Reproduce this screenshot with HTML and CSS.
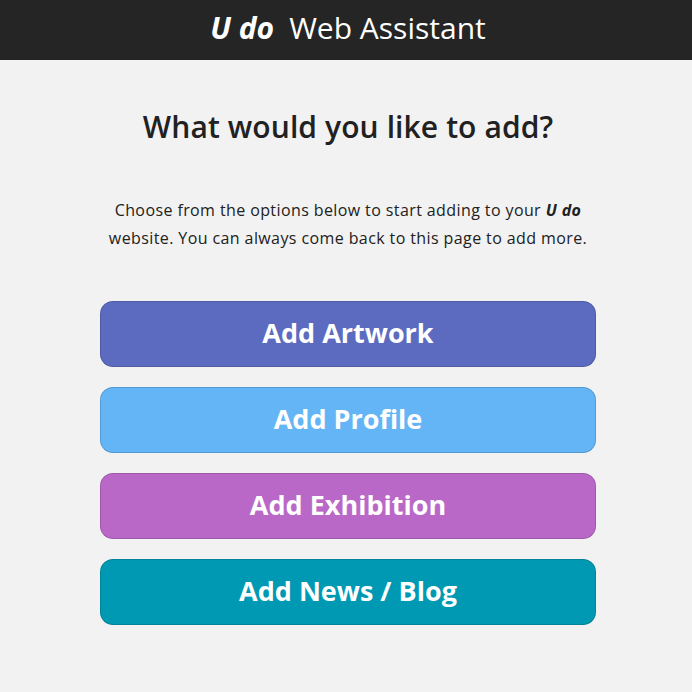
FILE: index.html
```html
<!DOCTYPE html>
<html lang="en">
<head>
    <meta charset="UTF-8">
    <meta name="viewport" content="width=device-width, initial-scale=1.0">
    <link rel="stylesheet" href="styles.css">
</head>
<body>
    <header class="top-bar">
        <span class="brand brand-top">U do</span>Web Assistant
    </header>
    <main class="content">
        <h1 class="title">What would you like to add?</h1>
        <p class="intro">
            Choose from the options below to start adding to your <span class="brand">U do</span>
            website. You can always come back to this page to add more.
        </p>
        <!-- Кнопки выбора -->
        <div class="options">
            <button class="option option-artwork">Add Artwork</button>
            <button class="option option-profile">Add Profile</button>
            <button class="option option-exhibition">Add Exhibition</button>
            <button class="option option-news">Add News / Blog</button>
        </div>
    </main>
</body>
</html>
```

FILE: styles.css
```css
body {
    background-color: #f2f2f2;
    margin: 0;
    padding: 0;
    font-family: "Open Sans", "Liberation Sans", sans-serif;
    color: #212121;
}

.top-bar {
    background-color: #252525;
    color: #ffffff;
    height: 60px;
    line-height: 55px;
    text-align: center;
    font-size: 30px;
    padding-left: 4px;
}

.brand {
    font-weight: bold;
    font-style: italic;
}

.brand-top {
    margin-right: 15px;
}

.content {
    width: 496px;
    margin: 0 0 0 calc(50% - 246px);
    text-align: center;
}

.title {
    margin: 47px 0 0;
    font-size: 30px;
    font-weight: 600;
    line-height: 40px;
    letter-spacing: 0.1px;
}

.intro {
    margin: 49px auto 0;
    max-width: 484px;
    font-size: 16px;
    line-height: 28px;
    letter-spacing: 0.4px;
}

.options {
    margin-top: 49px;
    display: flex;
    flex-direction: column;
    gap: 20px;
}

.option {
    height: 66px;
    padding: 0 0 3px;
    border-radius: 13px;
    border: 1px solid rgba(0, 0, 0, 0.15);
    color: #ffffff;
    font-family: inherit;
    font-size: 27px;
    font-weight: bold;
    cursor: pointer;
}

.option-artwork {
    background-color: #5c6bc0;
}

.option-profile {
    background-color: #64b5f6;
}

.option-exhibition {
    background-color: #ba68c8;
}

.option-news {
    background-color: #0099b3;
}
```
